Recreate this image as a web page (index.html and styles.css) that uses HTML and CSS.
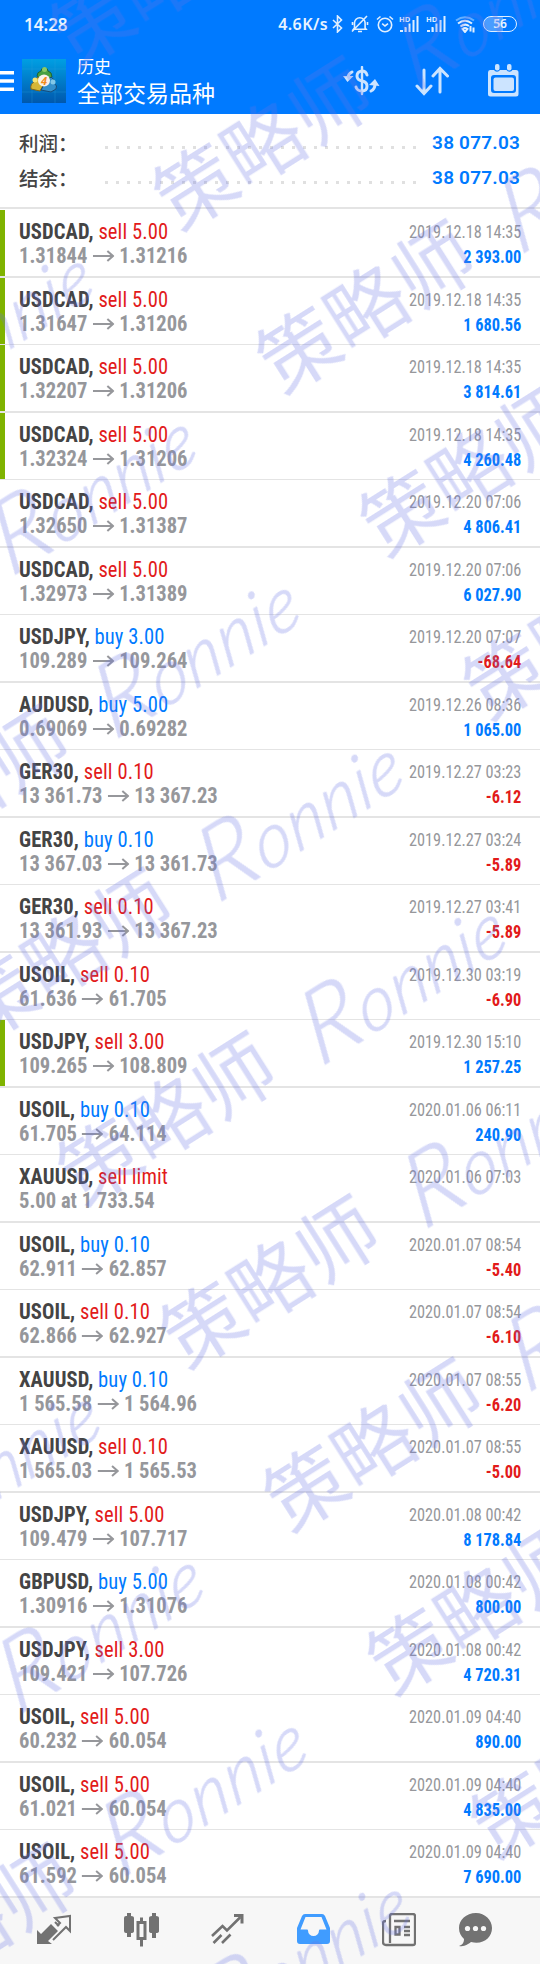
FILE: index.html
```html
<!DOCTYPE html>
<html lang="zh-CN">

<head>
    <meta charset="UTF-8" />
    <title>历史</title>
    <link rel="stylesheet" href="styles.css">
</head>

<body>

    <header class="header">
        <div class="status">
            <span class="clock">14:28</span>
            <span class="speed">4.6K/s</span>
            <svg class="bluetooth" width="11" height="18" viewBox="0 0 11 18"><path d="M1 5l8.500 8L5.500 17V1l4 4L1 13" /></svg>
            <svg class="bell" width="18" height="18" viewBox="0 0 18 18"><path d="M3.500 13V8a5.300 5.300 0 0 1 10.600 0v5l1 1.300H2.500zM7 16.500h4M16 1L1 16.500M1.500 7v3M16.500 7v3" /></svg>
            <svg class="alarm" width="18" height="18" viewBox="0 0 18 18"><circle cx="9" cy="10" r="6.700" /><path d="M1 4.500L4.500 1.500M17 4.500L13.500 1.500M6.200 8.700L9 11l3-2.300" /></svg>
            <svg class="signal" width="22" height="18" viewBox="0 0 22 18"><text x="0" y="6.500">HD</text><path class="dim" d="M7 13v4" /><path d="M6.500 12v5M10.500 8.500v8.500M14.500 5v12M18.500 1v16" /><path d="M1 16h3" /></svg>
            <svg class="signal" width="22" height="18" viewBox="0 0 22 18"><text x="0" y="6.500">HD</text><path class="dim" d="M7 13v4" /><path d="M6.500 12v5M10.500 8.500v8.500M14.500 5v12M18.500 1v16" /><path d="M1 16h3" /></svg>
            <svg class="wifi" width="21" height="18" viewBox="0 0 21 18"><path class="dim" d="M1 5.500Q10 -1 19 5.500" /><path d="M3 8.500Q10 3 17 8.500M5.500 11.500Q10 8 14 11" /><path class="solid" d="M7.500 14Q10 12 12.500 14L10 17zM15.500 11v5.500M18.500 12.500v5" /></svg>
            <span class="battery">56</span>
        </div>
        <div class="toolbar">
            <svg class="menu" width="14" height="20" viewBox="0 0 14 20"><path d="M0 1.800h14M0 10h14M0 18.200h14" /></svg>
            <svg class="logo" width="44" height="44" viewBox="0 0 44 44">
                <defs>
                    <linearGradient id="sky" x1="0" y1="0" x2="0" y2="1">
                        <stop offset="0" stop-color="#009fe3" />
                        <stop offset="1" stop-color="#0058ad" />
                    </linearGradient>
                </defs>
                <rect width="44" height="44" fill="url(#sky)" />
                <path d="M0 10h44M0 33h44M10 0v44M33 0v44" stroke="#2ba3df" stroke-width=".5" opacity=".6" />
                <path d="M15 17q0-4 4-5 0-3 3.500-3T26 12q4 1 4 6l-7 4z" fill="#46a042" stroke="#1d6337" />
                <circle cx="22.500" cy="10.500" r="2.500" fill="#8aca67" />
                <path d="M9 30q-1-5 3-7 1-4 5-5l5 7-4 7z" fill="#d5b637" stroke="#816718" />
                <circle cx="13" cy="21" r="2.500" fill="#f4e476" />
                <path d="M19 31l4-7 6-6q4 2 3 6 4 3 2 6l-5 3z" fill="#3490cc" stroke="#174c79" />
                <circle cx="31" cy="23" r="2.500" fill="#82c8e8" />
                <circle cx="22" cy="21.500" r="6" fill="#f8f2ea" />
                <text x="22" y="25.500">4</text>
            </svg>
            <div class="titles">
                <div class="title-small">历史</div>
                <div class="title-main">全部交易品种</div>
            </div>
            <svg class="tool money" width="37" height="30" viewBox="0 0 37 30">
                <path d="M19 1v27" stroke-width="2.400" />
                <path d="M24 9q-1-4-5-4-5 .5-5 5 0 4 5 5 5 1 5 5 0 5-5 5-5 0-6-4" stroke-width="3" />
                <path d="M9 6q-4 2-4 6M28 25q4-2 4-7" stroke-width="3" />
                <path class="solid" d="M0 10l4.500 6 6-6zM26 19l6-6 4.500 7z" />
            </svg>
            <svg class="tool sort" width="34" height="30" viewBox="0 0 34 30"><path d="M9 4v23M2 20l7 7.500 7-7.500M25 26V3M18 10l7-7.500 7.500 7.500" /></svg>
            <svg class="tool calendar" width="33" height="34" viewBox="0 0 33 34">
                <path class="solid" fill-rule="evenodd" d="M3 6h4a3.500 3.500 0 0 0 6 0h6.500a3.500 3.500 0 0 0 6 0H29q2.500 0 2.500 2.500V30q0 2.500-2.500 2.500H3.500Q1 32.500 1 30V8.500Q1 6 3 6zM7 11q-3 0-3 3v12q0 3 3 3h19q3 0 3-3V14q0-3-3-3z" />
                <rect class="solid" x="6.500" y="13.500" width="20.500" height="13.500" rx="2" />
                <rect class="solid" x="8" y="0" width="4.500" height="6.500" rx="2" />
                <rect class="solid" x="20" y="0" width="4.500" height="6.500" rx="2" />
            </svg>
        </div>
    </header>

    <section class="summary">
        <div class="summary-row"><span class="label">利润：</span><span class="dots"></span><b>38 077.03</b></div>
        <div class="summary-row"><span class="label">结余：</span><span class="dots"></span><b>38 077.03</b></div>
    </section>

    <main class="deals" id="deals"></main>

    <nav class="tabs">
        <svg width="34" height="34" viewBox="0 0 34 34">
            <path class="fill" d="M0 31V17l4 4L14 11l7 7-10 10 4 3z" />
            <path d="M20 13l3-3-5-5L33 3v15l-4-4-13 13M18 9l4 4" stroke-width="2" />
        </svg>
        <svg width="35" height="34" viewBox="0 0 35 34">
            <path class="fill" d="M0 5q0-2 2-2h1V0h4v3q3 0 3 2v13q0 2-3 2v4H3v-4H2q-2 0-2-2zM25 5q0-2 3-2V0h4v3q3 0 3 2v13q0 2-3 2v5h-4v-5q-3 0-3-2z" />
            <path d="M14 9.500h7v16h-7zM17.500 9.500V4.500M17.500 26v7.500" stroke-width="3" />
        </svg>
        <svg width="33" height="34" viewBox="0 0 33 34">
            <path d="M1 23l10.500-10 4.500 4.500L29.500 4M2.500 30l8-8M11 30l8.500-8.500" stroke-width="2.600" />
            <path class="fill" d="M23 1h9.500v9.500h-3V4H23z" />
        </svg>
        <svg class="active" width="33" height="34" viewBox="0 0 33 34">
            <path class="fill" fill-rule="evenodd" d="M8 1h17q2 0 3 2l5 12v13q0 3-3 3H3q-3 0-3-3V15L5 3q1-2 3-2zM8.500 4L3.500 16.500H10a1 1 0 0 1 1 1 5.500 5.500 0 0 0 11 0 1 1 0 0 1 1-1h6.500L24.500 4z" />
        </svg>
        <svg width="34" height="34" viewBox="0 0 34 34">
            <path d="M8 30V3q0-2 2-2h21q2 0 2 2v27q0 2-2 2H4q-3 0-3-3V10q0-2 3-2M12 8h16M22 14h6M22 18h6M22 22h6M13.500 14h4v7.500h-4z" stroke-width="2.300" />
        </svg>
        <svg class="chat" width="34" height="34" viewBox="0 0 34 34">
            <path class="fill" d="M17 0C7 0 0 7 0 15c0 5 2 8 5 11 0 4-2 6-5 7 6 1 9-2 12-4 12 3 21-4 21-14C33 7 26 0 17 0z" />
            <circle cx="8.500" cy="15.500" r="2.600" /><circle cx="16.500" cy="15.500" r="2.600" /><circle cx="24.500" cy="15.500" r="2.600" />
        </svg>
    </nav>

    <!-- watermark laid over the whole page -->
    <svg class="watermark" width="540" height="1964">
        <defs>
            <pattern id="mark" width="602" height="193.200" patternUnits="userSpaceOnUse" patternTransform="rotate(-32.300) translate(20 200)">
                <text class="mark-cn" x="6" y="92">策略师</text>
                <text class="mark-en" transform="translate(282 101) skewX(-10)" textLength="226"><tspan class="mark-cap">R</tspan>onnie</text>
            </pattern>
        </defs>
        <rect width="540" height="1964" fill="url(#mark)" />
    </svg>

    <script>
        // symbol, side, volume, open, close, time, profit, marked
        const deals = [
            ['USDCAD', 'sell', '5.00', '1.31844', '1.31216', '2019.12.18 14:35', '2 393.00', true],
            ['USDCAD', 'sell', '5.00', '1.31647', '1.31206', '2019.12.18 14:35', '1 680.56', true],
            ['USDCAD', 'sell', '5.00', '1.32207', '1.31206', '2019.12.18 14:35', '3 814.61', true],
            ['USDCAD', 'sell', '5.00', '1.32324', '1.31206', '2019.12.18 14:35', '4 260.48', true],
            ['USDCAD', 'sell', '5.00', '1.32650', '1.31387', '2019.12.20 07:06', '4 806.41'],
            ['USDCAD', 'sell', '5.00', '1.32973', '1.31389', '2019.12.20 07:06', '6 027.90'],
            ['USDJPY', 'buy', '3.00', '109.289', '109.264', '2019.12.20 07:07', '-68.64'],
            ['AUDUSD', 'buy', '5.00', '0.69069', '0.69282', '2019.12.26 08:36', '1 065.00'],
            ['GER30', 'sell', '0.10', '13 361.73', '13 367.23', '2019.12.27 03:23', '-6.12'],
            ['GER30', 'buy', '0.10', '13 367.03', '13 361.73', '2019.12.27 03:24', '-5.89'],
            ['GER30', 'sell', '0.10', '13 361.93', '13 367.23', '2019.12.27 03:41', '-5.89'],
            ['USOIL', 'sell', '0.10', '61.636', '61.705', '2019.12.30 03:19', '-6.90'],
            ['USDJPY', 'sell', '3.00', '109.265', '108.809', '2019.12.30 15:10', '1 257.25', true],
            ['USOIL', 'buy', '0.10', '61.705', '64.114', '2020.01.06 06:11', '240.90'],
            ['XAUUSD', 'sell', 'limit', '5.00 at 1 733.54', '', '2020.01.06 07:03', ''],
            ['USOIL', 'buy', '0.10', '62.911', '62.857', '2020.01.07 08:54', '-5.40'],
            ['USOIL', 'sell', '0.10', '62.866', '62.927', '2020.01.07 08:54', '-6.10'],
            ['XAUUSD', 'buy', '0.10', '1 565.58', '1 564.96', '2020.01.07 08:55', '-6.20'],
            ['XAUUSD', 'sell', '0.10', '1 565.03', '1 565.53', '2020.01.07 08:55', '-5.00'],
            ['USDJPY', 'sell', '5.00', '109.479', '107.717', '2020.01.08 00:42', '8 178.84'],
            ['GBPUSD', 'buy', '5.00', '1.30916', '1.31076', '2020.01.08 00:42', '800.00'],
            ['USDJPY', 'sell', '3.00', '109.421', '107.726', '2020.01.08 00:42', '4 720.31'],
            ['USOIL', 'sell', '5.00', '60.232', '60.054', '2020.01.09 04:40', '890.00'],
            ['USOIL', 'sell', '5.00', '61.021', '60.054', '2020.01.09 04:40', '4 835.00'],
            ['USOIL', 'sell', '5.00', '61.592', '60.054', '2020.01.09 04:40', '7 690.00']
        ];

        const arrow = '<svg class="arrow" width="23" height="12" viewBox="0 0 23 12"><path d="M0 6h21.500M15.500 1l6 5-6 5" /></svg>';

        document.getElementById('deals').innerHTML = deals.map(([symbol, side, volume, open, close, time, profit, marked]) => `
            <div class="deal${marked ? ' marked' : ''}">
                <div class="left">
                    <div class="order"><b>${symbol},</b> <span class="${side}">${side} ${volume}</span></div>
                    <div class="price">${open}${close ? arrow + close : ''}</div>
                </div>
                <div class="right">
                    <div class="time">${time}</div>
                    <div class="profit ${profit.startsWith('-') ? 'loss' : ''}">${profit}</div>
                </div>
            </div>`).join('');
    </script>

</body>

</html>
```
FILE: styles.css
```css
* {
    box-sizing: border-box;
}

body {
    margin: 0;
    width: 540px;
    height: 1964px;
    overflow: hidden;
    background: #fff;
    font-family: Roboto, "Noto Sans CJK SC", sans-serif;
}

svg {
    display: block;
    flex: none;
    fill: none;
}

/* header */
.header {
    height: 114px;
    background: #007aff;
    color: #fff;
}

.status {
    display: flex;
    align-items: center;
    height: 48px;
    padding: 0 23px 0 24px;
    font: 600 17px/1 "Noto Sans", sans-serif;
    color: #e8f3ff;
}

.status svg {
    stroke: #e0efff;
    stroke-width: 1.6;
}

.speed {
    margin-left: auto;
    font-size: 16px;
    letter-spacing: .4px;
}

.bluetooth { margin-left: 4px; }
.bell { margin-left: 8px; }
.alarm { margin-left: 7px; }
.signal { margin-left: 5px; }
.wifi { margin-left: 7px; }

.status .signal {
    stroke-width: 2;
}

.signal text {
    font: 700 7.500px "Noto Sans", sans-serif;
    fill: #e0efff;
    stroke: none;
}

.status .wifi {
    stroke-width: 2;
}

.status .dim {
    opacity: .45;
}

.battery {
    width: 34px;
    height: 16px;
    margin-left: 7px;
    border: 1.500px solid #e0efff;
    border-radius: 8px;
    background: linear-gradient(90deg, #4a9dff 60%, #007aff 60%);
    font-size: 12px;
    line-height: 13px;
    text-align: center;
}

.toolbar {
    display: flex;
    align-items: center;
    height: 66px;
    padding-right: 20px;
}

.menu {
    stroke: #fff;
    stroke-width: 3.500;
}

.logo {
    margin-left: 8px;
}

.logo text {
    font: italic 700 11px "Noto Sans", sans-serif;
    text-anchor: middle;
    fill: #f28c1c;
}

.titles {
    margin-left: 11px;
    margin-right: auto;
    padding-bottom: 3px;
    font-family: "Noto Sans CJK SC", sans-serif;
}

.title-small {
    font-size: 17px;
    line-height: 25px;
}

.title-main {
    font-size: 23px;
    line-height: 29px;
}

.tool {
    stroke: #cce4ff;
    stroke-width: 3;
    stroke-linecap: round;
}

.tool .solid {
    fill: #cce4ff;
    stroke: none;
}

.sort { margin-left: 35px; }
.calendar { margin-left: 38px; }

/* totals */
.summary {
    height: 96px;
    padding: 11px 20px 0 19px;
    background: linear-gradient(#e4e4e4, #e4e4e4) 0 93px / 100% 2px no-repeat;
}

.summary-row {
    display: flex;
    align-items: center;
    height: 35px;
}

.label {
    width: 82px;
    font: 500 19.500px "Noto Sans CJK SC", sans-serif;
    color: #444;
}

.dots {
    flex: none;
    width: 319px;
    height: 11px;
    margin-top: 9px;
    background: radial-gradient(circle, #e0e0e0 1.500px, transparent 2px) 0 0 / 11px 11px;
}

.summary b {
    margin-left: auto;
    font-size: 19px;
    font-weight: 600;
    letter-spacing: .2px;
    color: #007aff;
}

/* deals */
.deal {
    display: flex;
    justify-content: space-between;
    height: 68px;
    padding: 10px 19px 0;
    border-bottom: 2px solid #e4e4e4;
    font-stretch: 75%;
    font-family: "Roboto Condensed", Roboto, sans-serif;
}

.deal:nth-child(even) {
    height: 67px;
    border-bottom-width: 1px;
}

.marked {
    background: linear-gradient(#7fb300, #7fb300) 0 0 / 5px 100% no-repeat;
}

.left {
    transform: scaleX(.935);
    transform-origin: left;
}

.order {
    font-size: 22px;
    line-height: 24px;
    letter-spacing: .1px;
    color: #444;
}

.price {
    display: flex;
    align-items: center;
    font-size: 22px;
    font-weight: 700;
    line-height: 24px;
    color: #96979b;
}

.arrow {
    margin: 0 5.500px;
    stroke: #96979b;
    stroke-width: 2.200;
}

.right {
    text-align: right;
}

.time {
    font-size: 19px;
    line-height: 23px;
    color: #96979b;
    transform: scaleX(.855);
    transform-origin: right;
}

.profit {
    font-size: 18px;
    font-weight: 700;
    line-height: 27px;
    color: #007aff;
    transform: scaleX(.91);
    transform-origin: right;
}

.buy { color: #007aff; }
.sell { color: #e21a1a; }
.deal .loss { color: #e21a1a; }

/* bottom tabs */
.tabs {
    display: flex;
    gap: 52.500px;
    height: 66px;
    padding: 15px 0 0 37px;
    background: #f7f7f7;
}

.tabs svg {
    stroke: #727272;
}

.tabs .fill {
    fill: #727272;
    stroke: none;
}

.tabs .active .fill {
    fill: #409cff;
}

.tabs .chat {
    margin-left: -10px;
}

.tabs .chat circle {
    fill: #f7f7f7;
    stroke: none;
}

/* watermark */
.watermark {
    position: absolute;
    top: 0;
    left: 0;
    pointer-events: none;
}

.watermark text {
    fill: rgb(103, 115, 229);
    opacity: .27;
}

.mark-cn {
    font: 400 79.500px "Noto Sans CJK SC", sans-serif;
}

.mark-en {
    font: italic 300 74px Lato, sans-serif;
    stroke: rgb(103, 115, 229);
    stroke-width: 1;
}

.mark-cap {
    font-size: 100px;
}
```
